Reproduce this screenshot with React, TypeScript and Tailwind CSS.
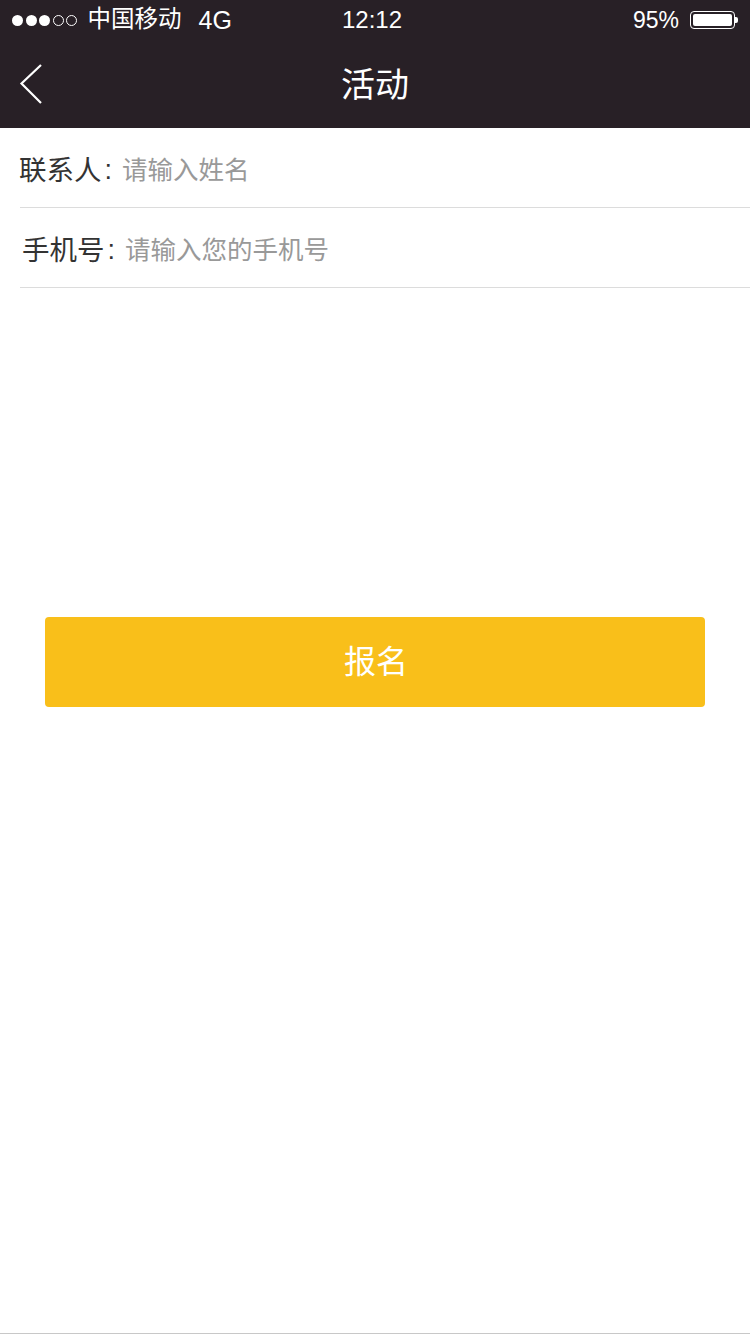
const font = { fontFamily: '"Liberation Sans", "Noto Sans CJK SC", sans-serif' };

const StatusBar = () => (
  <div className="relative flex h-10 items-center px-3 text-white">
    <div className="flex items-center">
      {[0, 1, 2].map((i) => (
        <span key={i} className="mr-[2.5px] h-[11px] w-[11px] rounded-full bg-white" />
      ))}
      {[0, 1].map((i) => (
        <span key={i} className="mr-[2.5px] h-[11px] w-[11px] rounded-full border border-white" />
      ))}
      <span className="ml-[8px] text-[23.5px] leading-none">中国移动</span>
      <span className="ml-[17px] text-[25px] leading-none">4G</span>
    </div>
    <span className="absolute left-[342px] text-[24px] leading-none">12:12</span>
    <div className="ml-auto flex items-center">
      <span className="text-[23px] leading-none">95%</span>
      <div className="ml-[11px] flex items-center">
        <div className="h-[18px] w-[45px] rounded-[4px] border border-white p-[2px]">
          <div className="h-full w-full rounded-[2px] bg-white" />
        </div>
        <div className="h-[6px] w-[3px] rounded-r-[2px] bg-white" />
      </div>
    </div>
  </div>
);

const NavBar = () => (
  <div className="relative flex h-[88px] items-center justify-center">
    <svg className="absolute left-[18px] top-[23px]" width="26" height="42" viewBox="0 0 26 42">
      <path d="M23 2 L3.5 20.5 L23 40" fill="none" stroke="white" strokeWidth="2.2" />
    </svg>
    <span className="mt-[2px] text-[34px] leading-none text-white">活动</span>
  </div>
);

const Field = ({ label, placeholder, pl }: { label: string; placeholder: string; pl: string }) => (
  <div className="ml-5 flex h-20 items-center border-b border-[#dcdcdc] pt-[6px]">
    <span className={`${pl} text-[27.5px] text-[#333333]`}>{label}</span>
    <span className="ml-[3px] text-[27px] text-[#333333]">:</span>
    <span className="ml-[10px] text-[25.5px] text-[#999999]">{placeholder}</span>
  </div>
);

export default function App() {
  return (
    <div className="flex min-h-[1334px] flex-col bg-white" style={font}>
      <div className="bg-[#282026]">
        <StatusBar />
        <NavBar />
      </div>
      <Field label="联系人" placeholder="请输入姓名" pl="-ml-[1px]" />
      <Field label="手机号" placeholder="请输入您的手机号" pl="ml-[2px]" />
      <div className="mt-[329px] px-[45px]">
        <button className="flex h-[90px] w-full items-center justify-center rounded-[4px] bg-[#f9bf1a] pl-[2px] text-[32px] text-white">
          报名
        </button>
      </div>
      <div className="flex-1" />
      <div className="h-px bg-[#c8c8c8]" />
    </div>
  );
}
